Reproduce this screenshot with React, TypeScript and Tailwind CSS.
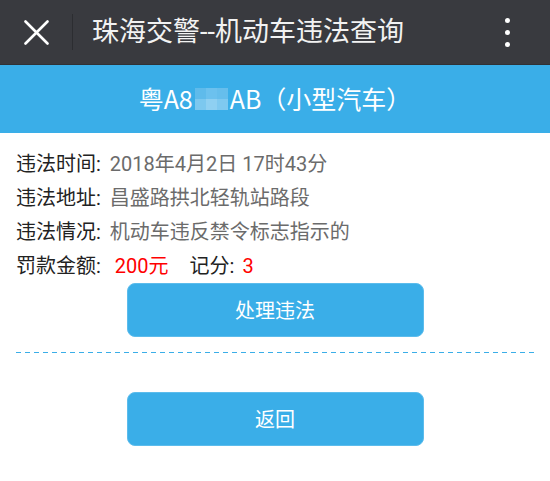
const rows = [
  { label: "违法时间:", value: "2018年4月2日 17时43分" },
  { label: "违法地址:", value: "昌盛路拱北轻轨站路段" },
  { label: "违法情况:", value: "机动车违反禁令标志指示的" },
];

// blurred part of the plate number
const mosaic = ["#5fbbeb", "#6cc1ee", "#66beec", "#7cc8ef", "#8fd0f2", "#7fc9f0"];

export default function App() {
  return (
    <div className="w-[550px] h-[481px] bg-white font-['Roboto','Noto_Sans_CJK_SC',sans-serif] overflow-hidden">
      {/* WeChat top bar */}
      <header className="h-[65px] bg-[#393a3f] flex items-center border-b border-[#303135]">
        <svg className="ml-[24px] w-[25px] h-[25px]" viewBox="0 0 25 25" fill="none" stroke="white" strokeWidth={2.6} strokeLinecap="round">
          <path d="M1.5 1.5L23.5 23.5M23.5 1.5L1.5 23.5" />
        </svg>
        <div className="ml-[23px] w-px h-[36px] bg-[#2c2d31]" />
        <h1 className="ml-[19px] text-[27px] text-[#f2f2f2] leading-none">珠海交警--机动车违法查询</h1>
        <div className="ml-auto mr-[40px] flex flex-col gap-[7px]">
          <span className="w-[5px] h-[5px] rounded-full bg-white" />
          <span className="w-[5px] h-[5px] rounded-full bg-white" />
          <span className="w-[5px] h-[5px] rounded-full bg-white" />
        </div>
      </header>

      {/* plate */}
      <div className="h-[68px] bg-[#3aaee8] flex items-center justify-center text-white text-[25px] font-['Noto_Sans_CJK_SC',sans-serif]">
        <span>粤A8</span>
        <span className="grid grid-cols-3 w-[33px] h-[22px] mx-[2px]">
          {mosaic.map((c, i) => (
            <span key={i} style={{ backgroundColor: c }} />
          ))}
        </span>
        <span>AB（小型汽车）</span>
      </div>

      <main className="px-[16px] pt-[14px]">
        {rows.map((r) => (
          <div key={r.label} className="flex text-[20px] leading-[34px]">
            <span className="text-[#222]">{r.label}</span>
            <span className="text-[#6b6b6b] ml-[9px]">{r.value}</span>
          </div>
        ))}
        <div className="flex text-[20px] leading-[34px]">
          <span className="text-[#222]">罚款金额:</span>
          <span className="text-[#ff0000] ml-[14px]">200元</span>
          <span className="text-[#222] ml-[21px]">记分:</span>
          <span className="text-[#ff0000] ml-[8px]">3</span>
        </div>

        <button className="mx-auto block w-[297px] h-[54px] rounded-[8px] bg-[#3aaee8] border border-[#5cbcec] text-white text-[20px] font-['Noto_Sans_CJK_SC',sans-serif]">
          处理违法
        </button>

        <div className="mt-[15px] h-px bg-[linear-gradient(to_right,#3aaee8_5px,transparent_5px)] bg-[length:9px_1px]" />

        <button className="mt-[39px] mx-auto block w-[297px] h-[54px] rounded-[8px] bg-[#3aaee8] border border-[#5cbcec] text-white text-[20px] font-['Noto_Sans_CJK_SC',sans-serif]">
          返回
        </button>
      </main>
    </div>
  );
}
